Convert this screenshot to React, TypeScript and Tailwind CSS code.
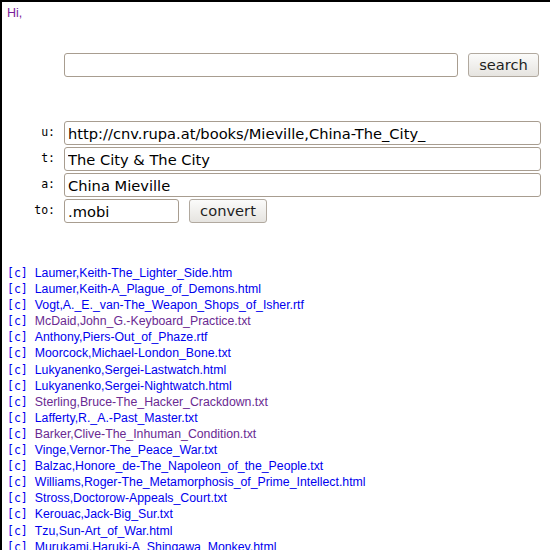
const books: { name: string; visited?: boolean }[] = [
  { name: "Laumer,Keith-The_Lighter_Side.htm" },
  { name: "Laumer,Keith-A_Plague_of_Demons.html" },
  { name: "Vogt,A._E._van-The_Weapon_Shops_of_Isher.rtf" },
  { name: "McDaid,John_G.-Keyboard_Practice.txt", visited: true },
  { name: "Anthony,Piers-Out_of_Phaze.rtf" },
  { name: "Moorcock,Michael-London_Bone.txt" },
  { name: "Lukyanenko,Sergei-Lastwatch.html" },
  { name: "Lukyanenko,Sergei-Nightwatch.html" },
  { name: "Sterling,Bruce-The_Hacker_Crackdown.txt", visited: true },
  { name: "Lafferty,R._A.-Past_Master.txt" },
  { name: "Barker,Clive-The_Inhuman_Condition.txt", visited: true },
  { name: "Vinge,Vernor-The_Peace_War.txt" },
  { name: "Balzac,Honore_de-The_Napoleon_of_the_People.txt" },
  { name: "Williams,Roger-The_Metamorphosis_of_Prime_Intellect.html" },
  { name: "Stross,Doctorow-Appeals_Court.txt" },
  { name: "Kerouac,Jack-Big_Sur.txt" },
  { name: "Tzu,Sun-Art_of_War.html" },
  { name: "Murukami,Haruki-A_Shingawa_Monkey.html" },
];

const inputCls =
  "h-[24px] border border-[#a89d90] rounded-[3px] bg-white px-[3px] text-[14.67px] text-black font-['DejaVu_Sans',sans-serif] outline-none";
const buttonCls =
  "h-[24px] border border-[#b1a99f] rounded-[3px] bg-gradient-to-b from-[#fbfbfa] to-[#e6e4e0] text-[14.67px] text-[#1e1e1e] font-['DejaVu_Sans',sans-serif] leading-none";
const labelCls =
  "text-right text-[11.5px] font-['DejaVu_Sans_Mono',monospace] text-black self-center";

function Field({ label, value }: { label: string; value: string }) {
  return (
    <>
      <label className={labelCls}>{label}</label>
      <input className={inputCls + " w-[477px]"} defaultValue={value} />
    </>
  );
}

export default function App() {
  return (
    <div className="h-screen overflow-hidden border-l-2 border-t-2 border-black bg-white font-['Liberation_Sans',Arial,sans-serif]">
      <div className="pl-[5px] pt-[4px] text-[12.5px] leading-[14px] text-[#7a1f9a]">Hi,</div>

      <div className="mt-[33px] ml-[62px] flex gap-[10px]">
        <input className={inputCls + " w-[394px]"} />
        <button className={buttonCls + " w-[71px]"}>search</button>
      </div>

      <div className="mt-[44px] grid grid-cols-[53px_auto] gap-x-[9px] gap-y-[2px] justify-start">
        <Field label="u:" value="http://cnv.rupa.at/books/Mieville,China-The_City_" />
        <Field label="t:" value="The City & The City" />
        <Field label="a:" value="China Mieville" />
        <label className={labelCls}>to:</label>
        <div className="flex gap-[10px]">
          <input className={inputCls + " w-[115px]"} defaultValue=".mobi" />
          <button className={buttonCls + " w-[78px]"}>convert</button>
        </div>
      </div>

      <ul className="mt-[42px] pl-[5px] text-[12.3px] leading-[16.1px]">
        {books.map((b) => (
          <li key={b.name} className="flex gap-[7px] whitespace-nowrap">
            <span className="font-['DejaVu_Sans_Mono',monospace] text-[11.5px] text-[#0000ee]">[c]</span>
            <a className={b.visited ? "text-[#6a2a92]" : "text-[#0000ee]"}>{b.name}</a>
          </li>
        ))}
      </ul>
    </div>
  );
}
